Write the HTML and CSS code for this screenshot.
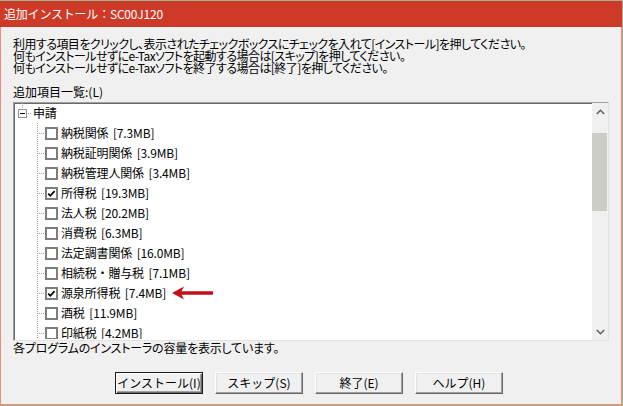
FILE: index.html
```html
<!DOCTYPE html>
<html lang="ja">
<head>
<meta charset="utf-8">
<title>追加インストール：SC00J120</title>
<link rel="stylesheet" href="styles.css">
</head>
<body>
<div class="window">
  <div class="titlebar">追加インストール：SC00J120</div>
  <div class="content">
    <div class="instructions">
      <div>利用する項目をクリックし、表示されたチェックボックスにチェックを入れて[インストール]を押してください。</div>
      <div>何もインストールせずにe-Taxソフトを起動する場合は[スキップ]を押してください。</div>
      <div>何もインストールせずにe-Taxソフトを終了する場合は[終了]を押してください。</div>
    </div>
    <div class="label">追加項目一覧:(L)</div>
    <div class="listbox">
      <div class="tree">
        <div class="root">
          <span class="rootbranch"><span class="toggle"><span class="minus"></span></span></span>
          <span class="hline"></span>
          <span class="lbl">申請</span>
        </div>
        <div class="node"><span class="branch"></span><span class="cb"></span><span class="lbl">納税関係 [7.3MB]</span></div>
        <div class="node"><span class="branch"></span><span class="cb"></span><span class="lbl">納税証明関係 [3.9MB]</span></div>
        <div class="node"><span class="branch"></span><span class="cb"></span><span class="lbl">納税管理人関係 [3.4MB]</span></div>
        <div class="node"><span class="branch"></span><span class="cb"><svg class="check" width="9" height="9" viewBox="0 0 9 9"><path d="M1.2 4.6 L3.3 6.8 L7.6 2.2" fill="none" stroke="#000" stroke-width="1.7"/></svg></span><span class="lbl">所得税 [19.3MB]</span></div>
        <div class="node"><span class="branch"></span><span class="cb"></span><span class="lbl">法人税 [20.2MB]</span></div>
        <div class="node"><span class="branch"></span><span class="cb"></span><span class="lbl">消費税 [6.3MB]</span></div>
        <div class="node"><span class="branch"></span><span class="cb"></span><span class="lbl">法定調書関係 [16.0MB]</span></div>
        <div class="node"><span class="branch"></span><span class="cb"></span><span class="lbl">相続税・贈与税 [7.1MB]</span></div>
        <div class="node"><span class="branch"></span><span class="cb"><svg class="check" width="9" height="9" viewBox="0 0 9 9"><path d="M1.2 4.6 L3.3 6.8 L7.6 2.2" fill="none" stroke="#000" stroke-width="1.7"/></svg></span><span class="lbl">源泉所得税 [7.4MB]</span></div>
        <div class="node"><span class="branch"></span><span class="cb"></span><span class="lbl">酒税 [11.9MB]</span></div>
        <div class="node last"><span class="branch"></span><span class="cb"></span><span class="lbl">印紙税 [4.2MB]</span></div>
      </div>
      <div class="scrollbar">
        <div class="sbtn"><svg width="9" height="6" viewBox="0 0 9 6"><path d="M0.8 5 L4.5 1.3 L8.2 5" fill="none" stroke="#606060" stroke-width="1.6"/></svg></div>
        <div class="track"><div class="thumb"></div></div>
        <div class="sbtn"><svg width="9" height="6" viewBox="0 0 9 6"><path d="M0.8 1 L4.5 4.7 L8.2 1" fill="none" stroke="#606060" stroke-width="1.6"/></svg></div>
      </div>
    </div>
    <div class="status">各プログラムのインストーラの容量を表示しています。</div>
    <div class="buttons">
      <button class="btn default">インストール(I)</button>
      <button class="btn">スキップ(S)</button>
      <button class="btn">終了(E)</button>
      <button class="btn">ヘルプ(H)</button>
    </div>
  </div>
  <svg class="arrow" width="42" height="14" viewBox="0 0 42 14"><polygon points="0,7 12,0.5 9.5,5.3 41,5.3 41,8.7 9.5,8.7 12,13.5" fill="#C3101A"/></svg>
</div>
</body>
</html>
```
FILE: styles.css
```css
html, body {
  margin: 0;
  padding: 0;
}
body {
  background: #9fb190;
  width: 623px;
  height: 406px;
  overflow: hidden;
  font-family: "Noto Sans CJK JP", "Noto Sans", sans-serif;
  font-size: 12px;
  color: #000;
}
.window {
  position: relative;
  margin-top: 1px;
  width: 622px;
  height: 404px;
  box-sizing: border-box;
  border: 1px solid #f2897a;
  border-top: 0;
  background: #f0f0f0;
  display: flex;
  flex-direction: column;
}
.titlebar {
  height: 26px;
  background: #cd3b28;
  color: #fff;
  font-size: 12px;
  line-height: 26px;
  margin: 0 -1px;
  padding-left: 4px;
  letter-spacing: -0.2px;
}
.content {
  padding: 0 12px;
  display: flex;
  flex-direction: column;
}
.instructions {
  margin-top: 11px;
  line-height: 12px;
  font-size: 12px;
  font-feature-settings: "palt";
  letter-spacing: -0.55px;
  white-space: nowrap;
}
.label {
  margin-top: 12px;
  line-height: 12px;
  height: 12px;
}
.listbox {
  margin-top: 4px;
  height: 239px;
  box-sizing: border-box;
  border: 1px solid;
  border-color: #a0a0a0 #e3e3e3 #e3e3e3 #a0a0a0;
  box-shadow: inset 1px 1px 0 #696969;
  background: #fff;
  display: flex;
  overflow: hidden;
}
.tree {
  flex: 1;
  overflow: hidden;
}
.root, .node {
  height: 20px;
  display: flex;
  align-items: center;
  white-space: nowrap;
}
.node.last {
  height: 16px;
  align-items: flex-start;
  overflow: hidden;
}
.node.last .branch {
  height: 16px;
}
.node.last .cb {
  margin-top: 4px;
}
.node.last .lbl {
  line-height: 16px;
  margin-top: 2px;
}
.root {
  padding-left: 4px;
}
.rootbranch {
  width: 9px;
  height: 20px;
  display: flex;
  align-items: center;
  background-image: repeating-linear-gradient(to bottom, #a0a0a0 0 1px, transparent 1px 2px);
  background-size: 1px 6px;
  background-position: 4px 0;
  background-repeat: no-repeat;
}
.toggle {
  width: 9px;
  height: 9px;
  box-sizing: border-box;
  border: 1px solid #919191;
  background: #fff;
  display: flex;
  align-items: center;
  justify-content: center;
}
.minus {
  width: 5px;
  height: 1px;
  background: #000;
}
.hline {
  width: 4px;
  height: 1px;
  margin-left: 1px;
  background-image: repeating-linear-gradient(to right, #a0a0a0 0 1px, transparent 1px 2px);
}
.root .lbl {
  margin-left: 1px;
}
.node {
  padding-left: 23px;
}
.branch {
  width: 8px;
  height: 20px;
  background-image:
    repeating-linear-gradient(to bottom, #a0a0a0 0 1px, transparent 1px 2px),
    repeating-linear-gradient(to right, #a0a0a0 0 1px, transparent 1px 2px);
  background-size: 1px 20px, 7px 1px;
  background-position: 0 0, 2px 10px;
  background-repeat: no-repeat;
}
.cb {
  width: 13px;
  height: 13px;
  box-sizing: border-box;
  border: 2px solid #7d7d7d;
  background: #fff;
  display: flex;
  align-items: flex-end;
  justify-content: flex-start;
}
.check {
  display: block;
}
.node .lbl {
  margin-left: 3px;
}
.lbl {
  font-size: 12px;
  line-height: 20px;
  letter-spacing: -0.15px;
  word-spacing: 2px;
}
.scrollbar {
  width: 16px;
  background: #f0f0f0;
  display: flex;
  flex-direction: column;
}
.sbtn {
  height: 17px;
  display: flex;
  align-items: center;
  justify-content: center;
}
.track {
  flex: 1;
}
.thumb {
  margin-top: 13px;
  height: 78px;
  width: 15px;
  background: #cdcdc8;
}
.status {
  margin-top: 1px;
  line-height: 12px;
  height: 12px;
  font-feature-settings: "palt";
  letter-spacing: -0.2px;
}
.buttons {
  margin-top: 18px;
  padding-left: 102px;
  display: flex;
  gap: 12px;
}
.btn {
  width: 88px;
  height: 22px;
  box-sizing: border-box;
  margin: 0;
  padding: 0;
  font-family: "Noto Sans CJK JP", "Noto Sans", sans-serif;
  font-size: 12px;
  color: #000;
  background: #f0f0f0;
  border: 1px solid;
  border-color: #ffffff #696969 #696969 #ffffff;
  box-shadow: inset -1px -1px 0 #a0a0a0, inset 1px 1px 0 #e3e3e3;
  line-height: 18px;
}
.btn.default {
  border-color: #1a1a1a;
  box-shadow: inset 1px 1px 0 #ffffff, inset -1px -1px 0 #696969, inset -2px -2px 0 #a0a0a0;
}
.arrow {
  position: absolute;
  left: 171px;
  top: 285px;
}
```
